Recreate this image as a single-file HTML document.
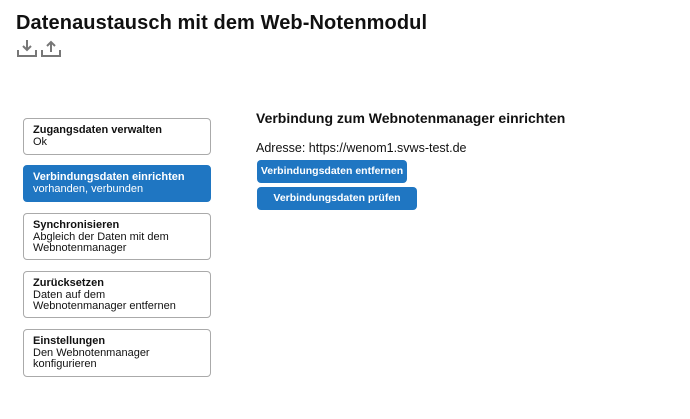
<!DOCTYPE html>
<html><head><meta charset="utf-8"><style>
body{margin:0;width:690px;height:419px;background:#fff;font-family:"Liberation Sans",sans-serif;color:#111;position:relative;overflow:hidden}
h1{position:absolute;left:16px;top:12px;margin:0;font-size:20px;font-weight:bold;letter-spacing:0.1px}
.ic{position:absolute;top:38px}
.box{position:absolute;left:23px;width:188px;border:1px solid #aaa;border-radius:4px;font-size:11px;line-height:11px;padding:6px 0 0 9px;box-sizing:border-box}
.box b{display:block;margin-bottom:1px}
.sel{background:#1f76c2;border-color:#1f76c2;color:#fff}
.r{position:absolute;left:256px}
.btn{position:absolute;left:257px;background:#1f76c2;color:#fff;font-weight:bold;font-size:10.5px;border-radius:4px;height:23px;line-height:23px;box-sizing:border-box;white-space:nowrap;text-align:center}
</style></head><body>
<h1>Datenaustausch mit dem Web-Notenmodul</h1>
<svg class="ic" style="left:17px" width="20" height="20" viewBox="0 0 20 20" fill="none" stroke="#777" stroke-width="2"><path d="M1 12v6h18v-6"/><path d="M10 2v10M6 8l4 4 4-4"/></svg>
<svg class="ic" style="left:41px" width="20" height="20" viewBox="0 0 20 20" fill="none" stroke="#777" stroke-width="2"><path d="M1 12v6h18v-6"/><path d="M10 14V4M6 8l4-4 4 4"/></svg>
<div class="box" style="top:118px;height:37px"><b>Zugangsdaten verwalten</b>Ok</div>
<div class="box sel" style="top:165px;height:37px"><b>Verbindungsdaten einrichten</b>vorhanden, verbunden</div>
<div class="box" style="top:213px;height:47px"><b>Synchronisieren</b>Abgleich der Daten mit dem<br>Webnotenmanager</div>
<div class="box" style="top:271px;height:47px"><b>Zurücksetzen</b>Daten auf dem<br>Webnotenmanager entfernen</div>
<div class="box" style="top:329px;height:48px"><b>Einstellungen</b>Den Webnotenmanager<br>konfigurieren</div>
<div class="r" style="top:110px;font-size:14px;font-weight:bold">Verbindung zum Webnotenmanager einrichten</div>
<div class="r" style="top:141px;font-size:12.5px">Adresse: https://wenom1.svws-test.de</div>
<div class="btn" style="top:160px;width:150px">Verbindungsdaten entfernen</div>
<div class="btn" style="top:187px;width:160px">Verbindungsdaten prüfen</div>
</body></html>
